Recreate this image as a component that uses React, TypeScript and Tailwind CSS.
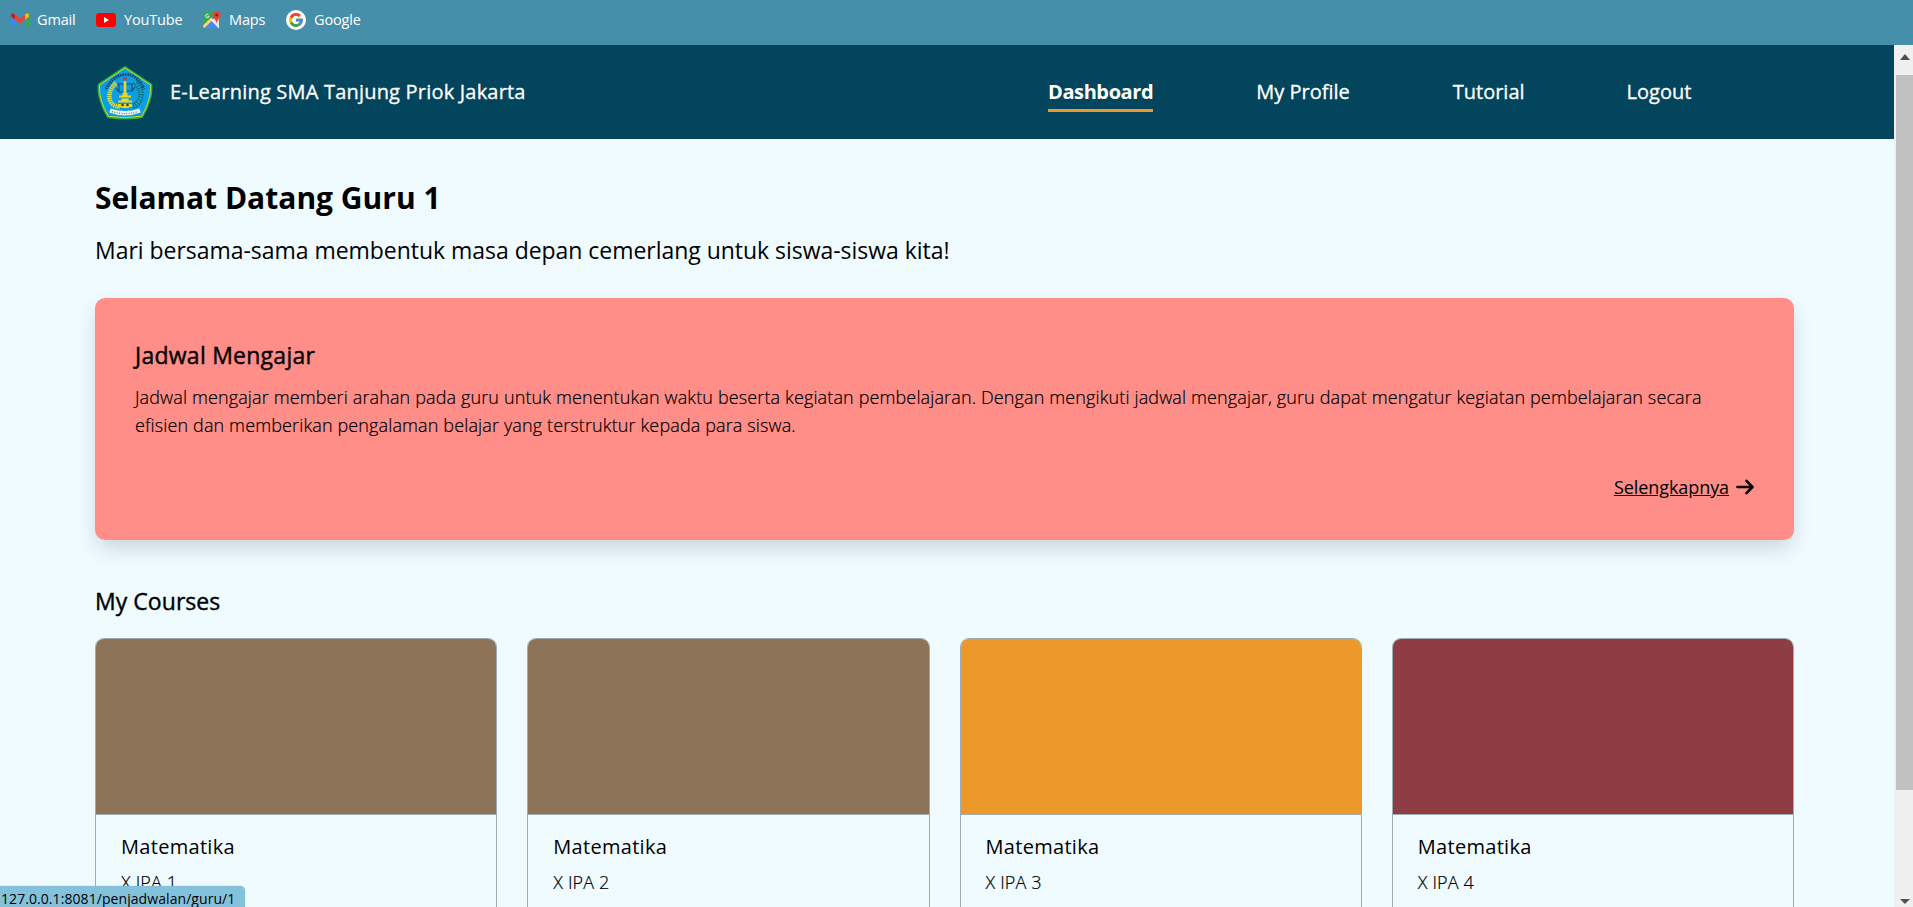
import React from "react";

function GmailIcon() {
  return (
    <svg width="18" height="14" viewBox="0 0 18 14">
      <path d="M0 3v9.500c0 .8.5 1.300 1.200 1.300H4V6z" fill="#4285f4" />
      <path d="M18 3v9.500c0 .8-.5 1.300-1.200 1.300H14V6z" fill="#34a853" />
      <path d="M4 1.600 9 5.400l5-3.800v5L9 10.400 4 6.600z" fill="#ea4335" />
      <path d="M0 2.200C0 .2 2 -.4 3.400.9L4 1.400v5.200L0 3.800z" fill="#c5221f" />
      <path d="M18 2.200C18 .2 16 -.4 14.600.9l-.6.5v5.200l4-2.800z" fill="#fbbc04" />
    </svg>
  );
}

function YouTubeIcon() {
  return (
    <svg width="20" height="14" viewBox="0 0 20 14">
      <rect width="20" height="14" rx="3" fill="#f00" />
      <path d="M8 4l5 3-5 3z" fill="#fff" />
    </svg>
  );
}

function MapsIcon() {
  return (
    <svg width="18" height="18" viewBox="0 0 18 18">
      <path d="M0 2.500 1.500 1H13L0 15z" fill="#34a853" />
      <path d="M8 8 16 16.500V7z" fill="#e0e0e0" />
      <path d="M1 17 8.500 9.500 16 17z" fill="#4a89f3" />
      <path d="M0 14.500 8 6.500 10 8.500 1.500 17 0 16z" fill="#fdd663" />
      <path d="M8.500 8.800 16 16.500" stroke="#f5f5f5" strokeWidth="1.500" />
      <path d="M5.500 3.700A1.800 1.800 0 1 0 6 5.300H4.300" fill="none" stroke="#d9f0df" strokeWidth="1" />
      <path d="M13.600 0C11.300 0 9.600 1.700 9.600 4c0 3 3.300 4 4 8.500C14.300 8 17.800 7 17.800 4c0-2.300-1.900-4-4.200-4z" fill="#ea4335" />
      <circle cx="13.700" cy="4" r="1.500" fill="#8c1c14" />
    </svg>
  );
}

function GoogleIcon() {
  return (
    <svg width="20" height="20" viewBox="0 0 20 20">
      <circle cx="10" cy="10" r="10" fill="#fff" />
      <g transform="translate(1.700 1.700) scale(.346)">
        <path fill="#FBBC05" d="M43.600 20.100H42V20H24v8h11.300C33.700 32.700 29.200 36 24 36c-6.600 0-12-5.400-12-12s5.400-12 12-12c3.100 0 5.800 1.200 8 3l5.700-5.600C34 6 29.300 4 24 4 13 4 4 13 4 24s9 20 20 20 20-9 20-20c0-1.300-.1-2.600-.4-3.900z" />
        <path fill="#EA4335" d="m6.300 14.700 6.600 4.800C14.700 15.100 19 12 24 12c3.100 0 5.800 1.200 8 3l5.700-5.600C34 6 29.300 4 24 4 16.300 4 9.700 8.300 6.300 14.700z" />
        <path fill="#34A853" d="M24 44c5.200 0 9.900-2 13.400-5.200l-6.200-5.200C29.200 35.100 26.700 36 24 36c-5.200 0-9.600-3.300-11.300-7.900l-6.500 5C9.500 39.600 16.200 44 24 44z" />
        <path fill="#4285F4" d="M43.600 20.100H24v8h11.300a12 12 0 0 1-4.100 5.600l6.200 5.200C37 39.200 44 34 44 24c0-1.300-.1-2.600-.4-3.900z" />
      </g>
    </svg>
  );
}

function SchoolLogo() {
  return (
    <svg width="56" height="54" viewBox="0 0 56 54" className="mt-[2px]">
      <path d="M28 1.200 54.300 18.500Q55 27 52.500 34.500 49.500 44 45 51Q28 54 11 51 6.500 44 3.500 34.500 1 27 1.700 18.500z" fill="#0b9de6" stroke="#2fae3f" strokeWidth="2" strokeLinejoin="round" />
      <path d="M28 2 53.500 19Q54 27 51.800 34 49 43 44.500 50.300 28 53 11.500 50.300 7 43 4.200 34 2 27 2.500 19z" fill="none" stroke="#c6dc28" strokeWidth="1" />
      <path d="M9 23Q16 9.500 28 8.500T47 23" fill="none" stroke="#173f5e" strokeWidth="2.800" strokeDasharray="1.300 1 1.800 .9" />
      <path d="M19 17Q11.500 24 12.500 32T23 41" fill="none" stroke="#d7d936" strokeWidth="4.500" strokeDasharray="1.500 .6" />
      <path d="M38 16Q46 25 43.500 32T36 40" fill="none" stroke="#08706c" strokeWidth="5.500" strokeDasharray="1.300 1" />
      <path d="M38 16Q46 25 43.500 32T36 40" fill="none" stroke="#55b7c9" strokeWidth="1.500" strokeDasharray="1 2" />
      <path d="M20 18h16M19 22l3 4h4M30 25h5l3-4M22 18v7M35 18v7" fill="none" stroke="#234f6b" strokeWidth="1.200" />
      <path d="M26.700 15h2.600v12h1.200v2.500h3.500v2H22v-2h3.500V27h1.200zM24.500 32.500h7v2H35v2H21v-2h3.500zM21 38h14v3h-3v1h-8v-1h-3z" fill="#efd51e" />
      <circle cx="28" cy="13" r="1.800" fill="#ed2525" />
      <circle cx="25.500" cy="39" r="1.300" fill="#33402c" />
      <circle cx="30.500" cy="39" r="1.300" fill="#33402c" />
      <path d="M13 44.500Q28 50 43 44.500" fill="none" stroke="#e9f4ec" strokeWidth="4.500" />
      <path d="M15 45.500Q28 49.800 41 45.500" fill="none" stroke="#5f8273" strokeWidth="1.200" strokeDasharray="1 1.400" />
    </svg>
  );
}

const bookmarks = [
  { label: "Gmail", icon: <GmailIcon />, box: "w-[63px] gap-[8px]", offset: "mr-[22px]" },
  { label: "YouTube", icon: <YouTubeIcon />, box: "w-[84px] gap-[8px]", offset: "mr-[23px]" },
  { label: "Maps", icon: <MapsIcon />, box: "w-[62px] gap-[8px]", offset: "mr-[21px]" },
  { label: "Google", icon: <GoogleIcon />, box: "w-[76px] gap-[8px]", offset: "" },
];

const courses = [
  { name: "Matematika", room: "X IPA 1", color: "bg-[#8d7358]" },
  { name: "Matematika", room: "X IPA 2", color: "bg-[#8d7358]" },
  { name: "Matematika", room: "X IPA 3", color: "bg-[#ed982b]" },
  { name: "Matematika", room: "X IPA 4", color: "bg-[#8d3d43]" },
];

function BookmarksBar() {
  return (
    <div className="flex h-[45px] shrink-0 items-start bg-[#468faa] pt-[9px] pl-[11px] text-[14.5px] tracking-[-0.15px] text-white">
      {bookmarks.map((b) => (
        <div key={b.label} className={`flex h-[22px] shrink-0 items-center whitespace-nowrap ${b.box} ${b.offset}`}>
          <span className="shrink-0">{b.icon}</span>
          <span className="-mt-px">{b.label}</span>
        </div>
      ))}
    </div>
  );
}

function NavBar() {
  return (
    <nav className="flex h-[94px] shrink-0 items-center bg-[#03455c] pl-[97px] text-[20px] font-medium text-white">
      <SchoolLogo />
      <span className="ml-[17px] w-[878px] tracking-[0.2px] whitespace-nowrap [-webkit-text-stroke:0.3px]">E-Learning SMA Tanjung Priok Jakarta</span>
      <div className="flex items-center gap-[103px] whitespace-nowrap">
        <a className="mt-[6px] border-b-[3px] border-[#ed982b] pb-[3px] leading-[28px] font-bold tracking-[-0.4px]">Dashboard</a>
        <a className="[-webkit-text-stroke:0.3px]">My Profile</a>
        <a className="[-webkit-text-stroke:0.3px]">Tutorial</a>
        <a className="-ml-px [-webkit-text-stroke:0.3px]">Logout</a>
      </div>
    </nav>
  );
}

function Scrollbar() {
  return (
    <div className="flex w-[19px] shrink-0 flex-col items-center bg-[#f0f0f0] pl-[2px]">
      <div className="flex h-[30px] items-center pb-[7px]">
        <svg width="10" height="6" viewBox="0 0 10 6"><path d="M0 6 5 0l5 6z" fill="#505050" /></svg>
      </div>
      <div className="h-[715px] w-full bg-[#c1c1c1]" />
      <div className="flex flex-1 items-end pb-[3px]">
        <svg width="10" height="5" viewBox="0 0 10 5"><path d="M0 0h10L5 5z" fill="#505050" /></svg>
      </div>
    </div>
  );
}

export default function App() {
  return (
    <div className="relative flex h-[907px] w-[1913px] flex-col overflow-hidden bg-[#effbff] font-['Open_Sans',sans-serif] text-black">
      <BookmarksBar />
      <div className="flex min-h-0 flex-1">
        <div className="flex min-w-0 flex-1 flex-col overflow-hidden">
          <NavBar />
          <main className="flex flex-col pt-[39px] pr-[100px] pl-[95px]">
            <h1 className="text-[30px] leading-[40px] font-bold">Selamat Datang Guru 1</h1>
            <p className="mt-[16px] text-[23px] leading-[32px] tracking-[-0.035px] whitespace-nowrap">Mari bersama-sama membentuk masa depan cemerlang untuk siswa-siswa kita!</p>
            <section className="mt-[32px] flex h-[242px] flex-col rounded-[10px] bg-[#ff8e89] px-[40px] pt-[40px] shadow-[0_10px_22px_-3px_rgba(0,0,0,0.17)]">
              <h2 className="text-[23px] leading-[34px] font-medium tracking-[0.25px] [-webkit-text-stroke:0.4px]">Jadwal Mengajar</h2>
              <p className="mt-[11px] text-[18px] leading-[28px] font-light tracking-[0.13px] whitespace-nowrap [-webkit-text-stroke:0.2px]">
                Jadwal mengajar memberi arahan pada guru untuk menentukan waktu beserta kegiatan pembelajaran. Dengan mengikuti jadwal mengajar, guru dapat mengatur kegiatan pembelajaran secara
                <br />
                efisien dan memberikan pengalaman belajar yang terstruktur kepada para siswa.
              </p>
              <a className="mt-[34px] flex items-center justify-end gap-[7px] text-[18px] leading-[28px]">
                <span className="tracking-[-0.08px] underline">Selengkapnya</span>
                <svg width="18" height="16" viewBox="0 0 18 16" fill="none" stroke="#000" strokeWidth="2.600" strokeLinecap="round" strokeLinejoin="round">
                  <path d="M1.500 8h14M10.500 1.800 16.500 8 10.500 14.200" />
                </svg>
              </a>
            </section>
            <h2 className="mt-[44px] text-[23px] leading-[34px] font-medium tracking-[0.05px] [-webkit-text-stroke:0.4px]">My Courses</h2>
            <div className="mt-[20px] grid grid-cols-4 gap-[30px]">
              {courses.map((c) => (
                <article key={c.room} className="flex h-[330px] flex-col overflow-hidden rounded-[9px] border border-[#a0acb0]">
                  <div className={`h-[176px] shrink-0 border-b border-[#a0acb0] ${c.color}`} />
                  <div className="px-[25px] pt-[18px]">
                    <h3 className="text-[20px] leading-[28px] tracking-[0.3px]">{c.name}</h3>
                    <p className="mt-[7px] text-[18px] leading-[28px] font-light tracking-[0.15px] [-webkit-text-stroke:0.2px]">{c.room}</p>
                  </div>
                </article>
              ))}
            </div>
          </main>
        </div>
        <Scrollbar />
      </div>
      <div className="absolute bottom-0 left-0 h-[21px] w-[245px] rounded-tr-[5px] bg-[#84c2dc] pl-[1px] text-[14px] leading-[26px] tracking-[0.07px] whitespace-nowrap shadow-[0_0_1px_#7c929b]">
        127.0.0.1:8081/penjadwalan/guru/1
      </div>
    </div>
  );
}
